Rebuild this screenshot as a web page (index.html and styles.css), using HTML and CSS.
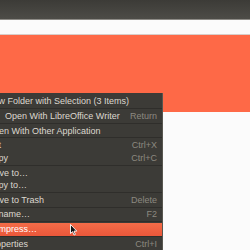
FILE: index.html
```html
<!DOCTYPE html>
<html lang="en">
<head>
    <meta charset="UTF-8">
    <title>Files - context menu</title>
    <link rel="stylesheet" href="styles.css">
</head>
<body>
    <div class="topbar"></div>
    <div class="pathbar"></div>
    <div class="selection"></div>
    <div class="view"></div>

    <div class="menu">
        <div class="item"><span>New Folder with Selection (3 Items)</span></div>
        <div class="sep"></div>
        <div class="item indent"><span>Open With LibreOffice Writer</span><span class="key">Return</span></div>
        <div class="sep"></div>
        <div class="item"><span>Open With Other Application</span></div>
        <div class="sep"></div>
        <div class="item"><span>Cut</span><span class="key">Ctrl+X</span></div>
        <div class="item"><span>Copy</span><span class="key">Ctrl+C</span></div>
        <div class="sep"></div>
        <div class="item"><span>Move to…</span></div>
        <div class="item"><span>Copy to…</span></div>
        <div class="sep"></div>
        <div class="item"><span>Move to Trash</span><span class="key">Delete</span></div>
        <div class="sep"></div>
        <div class="item"><span>Rename…</span><span class="key">F2</span></div>
        <div class="sep"></div>
        <div class="item active"><span>Compress…</span></div>
        <div class="sep"></div>
        <div class="item"><span>Properties</span><span class="key">Ctrl+I</span></div>
    </div>

    <!-- mouse pointer -->
    <svg class="pointer" width="8" height="12" viewBox="0 0 8 12">
        <path d="M0.5 0.5 L0.5 9.5 L2.6 7.6 L4 11 L5.4 10.4 L4 7.1 L6.8 7.1 Z" fill="#111" stroke="#fff" stroke-width="0.9" stroke-linejoin="round"/>
    </svg>
</body>
</html>
```

FILE: styles.css
```css
body {
    margin: 0;
    font-family: "Liberation Sans", Arial, sans-serif;
    background: #fbfbfb;
    overflow: hidden;
}
.topbar {
    height: 19px;
    background: linear-gradient(#3c3b37, #4d4c47);
    border-bottom: 1px solid #8d8b86;
}
.pathbar {
    height: 14px;
    background: #fbfbfb;
    border-bottom: 1px solid #d8cdc9;
}
.selection {
    height: 77px;
    background: #fe6947;
}
.view {
    height: 140px;
    background: #fbfbfb;
}
.menu {
    position: absolute;
    left: -20px;
    top: 93px;
    width: 182px;
    padding-top: 2px;
    background: #3c3b37;
    border-right: 1px solid #57564f;
    font-size: 9px;
    color: #dcd8cf;
}
.item {
    display: flex;
    justify-content: space-between;
    align-items: center;
    height: 12.5px;
    padding: 0 5px 0 7px;
    white-space: nowrap;
}
.item.indent {
    padding-left: 25px;
}
.item.active {
    height: 13px;
    background: linear-gradient(#f46c48, #ea573a);
    color: #fff;
}
.key {
    color: #8c8980;
}
.sep {
    height: 1px;
    margin: 0.6px 0;
    background: #2f2e2b;
    border-bottom: 0;
}
.pointer {
    position: absolute;
    left: 70px;
    top: 224px;
}
```
